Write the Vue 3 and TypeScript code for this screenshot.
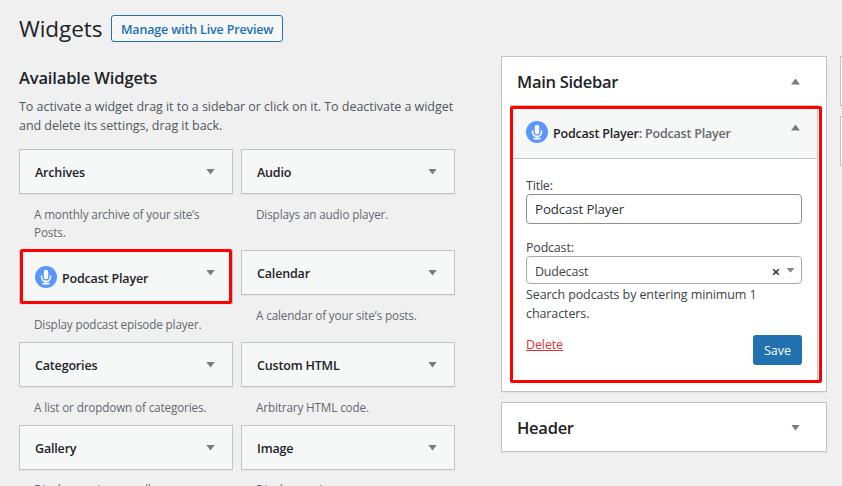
<script setup lang="ts">
import { ref, h } from 'vue'

interface Widget {
  name: string
  description: string
  podcast?: boolean
  cls?: string
}

const columns: Widget[][] = [
  [
    { name: 'Archives', description: 'A monthly archive of your site’s Posts.', cls: 'tall' },
    { name: 'Podcast Player', description: 'Display podcast episode player.', podcast: true, cls: 'mid' },
    { name: 'Categories', description: 'A list or dropdown of categories.' },
    { name: 'Gallery', description: 'Displays an image gallery.', cls: 'last' },
  ],
  [
    { name: 'Audio', description: 'Displays an audio player.', cls: 'tall' },
    { name: 'Calendar', description: 'A calendar of your site’s posts.', cls: 'mid' },
    { name: 'Custom HTML', description: 'Arbitrary HTML code.' },
    { name: 'Image', description: 'Displays an image.', cls: 'last' },
  ],
]

const title = ref('Podcast Player')

const MicIcon = () =>
  h('svg', { width: 22, height: 22, viewBox: '0 0 22 22' }, [
    h('circle', { cx: 11, cy: 11, r: 11, fill: '#5b97fb' }),
    h('rect', { x: 8.8, y: 3.8, width: 4.4, height: 9.4, rx: 2.2, fill: '#fff' }),
    h('path', {
      d: 'M6.6 10v1a4.4 4.4 0 0 0 8.8 0v-1M11 15.4v2M8 17.6h6',
      fill: 'none',
      stroke: '#fff',
      'stroke-width': 1.6,
      'stroke-linecap': 'round',
    }),
  ])
</script>

<template>
  <div class="page">
    <main class="available">
      <header class="heading">
        <h1>Widgets</h1>
        <a class="preview"><span>Manage with Live Preview</span></a>
      </header>
      <h2>Available Widgets</h2>
      <p class="intro">
        <span class="line">To activate a widget drag it to a sidebar or click on it. To deactivate a widget</span>
        <span class="line">and delete its settings, drag it back.</span>
      </p>
      <div class="columns">
        <div v-for="(col, i) in columns" :key="i" class="column">
          <article v-for="w in col" :key="w.name" class="widget" :class="w.cls">
            <div class="bar" :class="{ podcast: w.podcast }">
              <MicIcon v-if="w.podcast" class="mic" />
              <h3>{{ w.name }}</h3>
              <i class="arrow"></i>
              <div v-if="w.podcast" class="mark"></div>
            </div>
            <p class="desc">{{ w.description }}</p>
          </article>
        </div>
      </div>
    </main>

    <aside class="sidebars">
      <section class="panel main">
        <div class="panel-head">
          <h2>Main Sidebar</h2>
          <i class="arrow up"></i>
        </div>
        <div class="open">
          <div class="open-head">
            <MicIcon class="mic" />
            <h3>Podcast Player<span>: Podcast Player</span></h3>
            <i class="arrow up"></i>
          </div>
          <form class="form" @submit.prevent>
            <label>Title:</label>
            <input v-model="title" type="text" />
            <label class="podcast-label">Podcast:</label>
            <div class="select">
              <span class="value">Dudecast</span>
              <svg class="clear" width="8" height="8" viewBox="0 0 8 8"><path d="M1.2 1.2l5.6 5.6M6.8 1.2L1.2 6.8" stroke="#333" stroke-width="1.6" /></svg>
              <i class="arrow small"></i>
            </div>
            <p class="hint">Search podcasts by entering minimum 1<br />characters.</p>
            <div class="actions">
              <a class="delete">Delete</a>
              <button type="button"><span>Save</span></button>
            </div>
          </form>
          <div class="mark"></div>
        </div>
      </section>
      <section class="panel header">
        <h2>Header</h2>
        <i class="arrow"></i>
      </section>
    </aside>

    <div class="edge">
      <div class="edge-panel"></div>
      <div class="edge-panel"></div>
    </div>
  </div>
</template>

<style>
body {
  background: #f0f0f0;
  overflow: hidden;
}
</style>

<style scoped>
.page {
  box-sizing: border-box;
  width: 842px;
  height: 486px;
  overflow: hidden;
  display: flex;
  padding-left: 19px;
  background: #f0f0f0;
  color: #1d2327;
  font-family: 'Open Sans', 'Noto Sans', sans-serif;
  font-size: 12.5px;
}
.page * {
  box-sizing: border-box;
}
h1, h2, h3, p {
  margin: 0;
  white-space: nowrap;
}
.available {
  width: 436px;
  margin-right: 46px;
  flex: none;
}
.heading {
  display: flex;
  height: 42px;
  padding-top: 15px;
  gap: 8px;
}
h1 {
  width: 84px;
  font-size: 22.5px;
  font-weight: 400;
  line-height: 28px;
  letter-spacing: -0.05px;
}
.preview {
  width: 172px;
  height: 27px;
  border: 1px solid #2271b1;
  border-radius: 3px;
  background: #f6f7f7;
  color: #2271b1;
  font-weight: 600;
  line-height: 27px;
  padding-left: 9px;
  letter-spacing: -0.17px;
  white-space: nowrap;
}
h2 {
  font-size: 16.5px;
  font-weight: 600;
  line-height: 24px;
  letter-spacing: -0.28px;
}
.available > h2 {
  margin-top: 24px;
  letter-spacing: -0.14px;
}
.intro {
  margin-top: 7px;
  color: #50575e;
  line-height: 19px;
  letter-spacing: -0.04px;
}
.line {
  display: block;
}
.columns {
  display: flex;
  gap: 8px;
  margin-top: 14px;
}
.column {
  width: 214px;
}
.widget {
  height: 83px;
}
.widget.tall {
  height: 101px;
}
.widget.mid {
  height: 92px;
}
.bar {
  position: relative;
  display: flex;
  align-items: center;
  height: 45px;
  padding: 0 17px 0 15px;
  border: 1px solid #c3c4c7;
  background: #f6f7f7;
  box-shadow: 0 1px 1px rgba(0, 0, 0, 0.04);
}
.bar.podcast {
  height: 54px;
}
h3 {
  flex: 1;
  padding-top: 2px;
  font-size: 12.5px;
  font-weight: 600;
  line-height: 18px;
  letter-spacing: -0.17px;
}
.mic {
  flex: none;
  margin-right: 5px;
}
.podcast h3 {
  padding-top: 3px;
}
.arrow {
  flex: none;
  width: 9px;
  height: 6px;
  background: #787c82;
  clip-path: polygon(0 0, 100% 0, 50% 100%);
}
.arrow.up {
  clip-path: polygon(50% 0, 100% 100%, 0 100%);
}
.podcast .arrow {
  margin-bottom: 9px;
}
.mark {
  position: absolute;
  border: 3px solid #fe0000;
  border-radius: 2px;
  pointer-events: none;
}
.bar .mark {
  inset: -2px 0 -1px 0;
}
.desc {
  margin: 11px 15px 0;
  width: 184px;
  color: #646970;
  font-size: 11.7px;
  line-height: 18px;
  letter-spacing: -0.13px;
  white-space: normal;
}
.last .desc {
  margin-top: 10px;
}
.sidebars {
  flex: none;
  width: 326px;
  padding-top: 56px;
  margin-right: 13px;
}
.panel {
  border: 1px solid #c3c4c7;
  background: #fff;
  box-shadow: 0 1px 1px rgba(0, 0, 0, 0.04);
}
.panel.main {
  height: 336px;
  padding: 0 8px;
}
.panel-head {
  display: flex;
  align-items: center;
  justify-content: space-between;
  height: 48px;
  padding: 1px 18px 0 7px;
}
.panel.header {
  display: flex;
  align-items: center;
  justify-content: space-between;
  height: 50px;
  margin-top: 10px;
  padding: 1px 26px 0 15px;
}
.open {
  position: relative;
  width: 308px;
  height: 277px;
  border: 1px solid #c3c4c7;
}
.open-head {
  display: flex;
  align-items: center;
  height: 53px;
  padding: 0 17px 0 15px;
  border-bottom: 1px solid #c3c4c7;
  background: #f6f7f7;
}
.open-head h3 {
  padding-top: 3px;
  letter-spacing: -0.2px;
}
.open-head h3 span {
  color: #646970;
}
.open-head .arrow {
  margin-bottom: 9px;
}
.open .mark {
  top: 0;
  left: -1px;
  width: 312px;
  height: 277px;
}
.form {
  display: flex;
  flex-direction: column;
  padding: 17px 15px 0;
  color: #3c434a;
}
label {
  height: 18px;
  line-height: 19px;
  letter-spacing: -0.2px;
}
input {
  height: 30px;
  border: 1px solid #8c8f94;
  border-radius: 4px;
  padding: 0 8px;
  background: #fff;
  color: #2c3338;
  font: 400 13.3px 'Open Sans', sans-serif;
  letter-spacing: -0.12px;
  outline: none;
}
.podcast-label {
  margin-top: 14px;
}
.select {
  display: flex;
  align-items: center;
  height: 28px;
  border: 1px solid #aaa;
  border-radius: 4px;
  padding: 0 6px 0 8px;
  color: #444;
}
.value {
  flex: 1;
  padding-top: 2px;
  letter-spacing: -0.2px;
}
.clear {
  margin: 3px 6px 0 0;
}
.arrow.small {
  height: 5px;
  background: #888;
}
.hint {
  margin-top: 1px;
  line-height: 19px;
  letter-spacing: -0.1px;
}
.actions {
  display: flex;
  justify-content: space-between;
  margin-top: 12px;
}
.delete {
  height: 19px;
  line-height: 19px;
  color: #d63638;
  text-decoration: underline;
  letter-spacing: -0.12px;
}
button {
  width: 49px;
  height: 30px;
  border: 0;
  border-radius: 3px;
  background: #2271b1;
  color: #fff;
  padding: 0;
  font: 400 12.5px 'Open Sans', sans-serif;
}
.edge {
  flex: none;
  width: 12px;
  padding-top: 56px;
}
.edge-panel {
  height: 50px;
  margin-bottom: 10px;
  border: 1px solid #c3c4c7;
  background: #fff;
}
</style>
